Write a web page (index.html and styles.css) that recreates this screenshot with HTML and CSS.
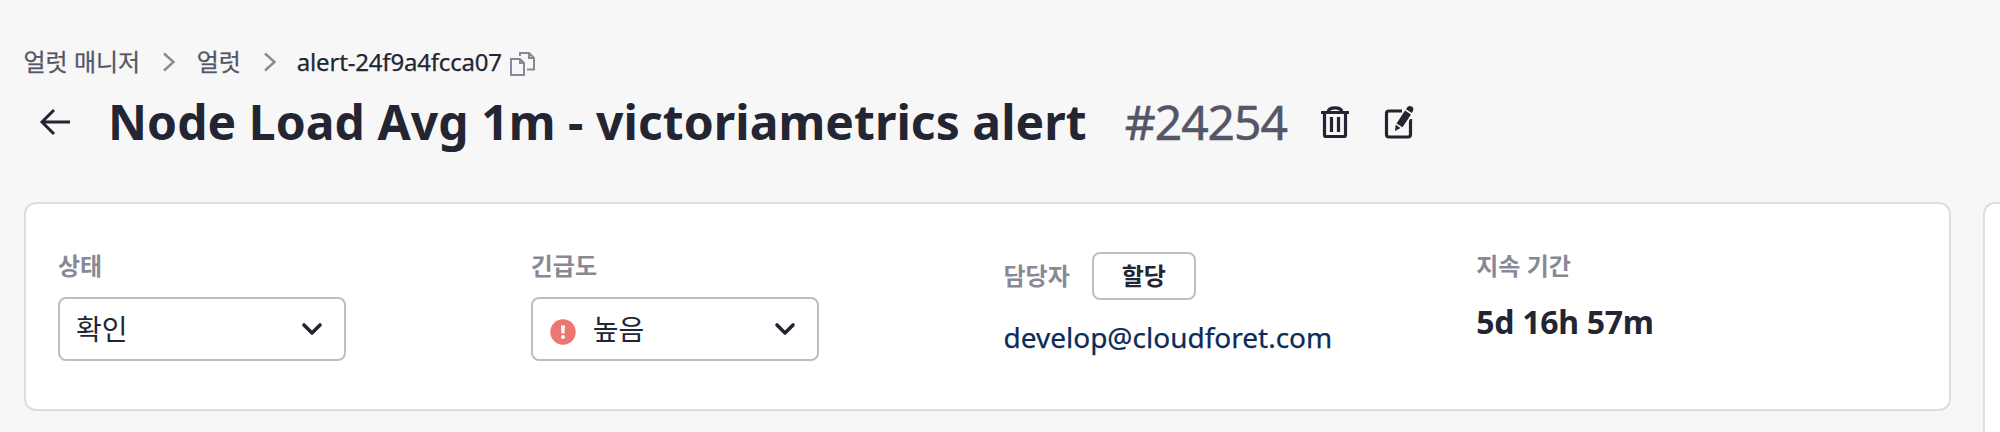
FILE: index.html
```html
<!DOCTYPE html>
<html lang="ko">
<head>
<meta charset="utf-8">
<title>Alert</title>
<link rel="stylesheet" href="styles.css">
</head>
<body>
<nav class="breadcrumb">
  <span class="crumb">얼럿 매니저</span>
  <svg class="separator" width="14" height="20" viewBox="0 0 14 20"><path d="M2 1.500 11.500 10 2 18.500"/></svg>
  <span class="crumb crumb-second">얼럿</span>
  <svg class="separator last" width="14" height="20" viewBox="0 0 14 20"><path d="M2 1.500 11.500 10 2 18.500"/></svg>
  <span class="crumb crumb-current">alert-24f9a4fcca07</span>
  <svg class="copy" width="25" height="24" viewBox="0 0 25 24"><path d="M10 4V1h9l5 5v11.500h-7M19 1v5h5M1 7h9l4 4v12H1zM10 7v4h4"/></svg>
</nav>
<header class="heading">
  <svg class="back" width="30" height="26" viewBox="0 0 30 26"><path d="M14 1 2 13l12 12M2 13h28"/></svg>
  <h1 class="title">Node Load Avg 1m - victoriametrics alert</h1>
  <span class="number">#24254</span>
  <svg class="action" width="28" height="32" viewBox="0 0 28 32"><path d="M0 6.500h28M7 6c1-5.500 13-5.500 14 0M3.500 7v22q0 1.500 1.500 1.500h18q1.500 0 1.500-1.500V7M10.500 11v15M17.500 11v15"/></svg>
  <svg class="action edit" width="28" height="33" viewBox="0 0 28 33"><path d="M17 5H4Q1.500 5 1.500 7.500v21Q1.500 31 4 31h19q2.500 0 2.500-2.500V13"/><path class="gap" d="M9 27l1-9 9-15 9 4-7 14z"/><path class="solid" d="m10 25 .6-6.300 4.900 3.300zM11.500 17.500 20 4.500l6 4L17.500 21.300zM21 3.200 22.300 1.300q1.900-2.400 4.500-.7 2.500 1.800 1.200 4.200l-1.200 2.200z"/></svg>
</header>
<main class="panels">
  <section class="card summary">
    <div class="field">
      <div class="label">상태</div>
      <div class="select"><span class="value">확인</span><svg class="chevron" width="20" height="13" viewBox="0 0 20 13"><path d="m2 2 8 8 8-8"/></svg></div>
    </div>
    <div class="field">
      <div class="label">긴급도</div>
      <div class="select"><svg class="urgency" width="26" height="26" viewBox="0 0 26 26"><circle cx="13" cy="13" r="12.700"/><path d="M11 6.500h4l-.5 8h-3z"/><circle class="dot" cx="13" cy="18" r="2"/></svg><span class="value">높음</span><svg class="chevron" width="20" height="13" viewBox="0 0 20 13"><path d="m2 2 8 8 8-8"/></svg></div>
    </div>
    <div class="field">
      <div class="assignee"><span class="label">담당자</span><button class="assign">할당</button></div>
      <a class="email">develop@cloudforet.com</a>
    </div>
    <div class="field">
      <div class="label">지속 기간</div>
      <div class="duration">5d 16h 57m</div>
    </div>
  </section>
  <aside class="card side"></aside>
</main>
</body>
</html>
```
FILE: styles.css
```css
* { box-sizing: border-box; }
body {
  display: flex;
  flex-direction: column;
  margin: 0;
  height: 432px;
  overflow: hidden;
  background: #f7f7f7;
  color: #232533;
  font-family: "Noto Sans", "Noto Sans CJK KR", sans-serif;
}
svg { display: block; flex: none; fill: none; stroke: currentColor; overflow: visible; }
.breadcrumb {
  display: flex;
  align-items: center;
  height: 36px;
  margin-top: 44px;
  padding-left: 23.5px;
  font-size: 24px;
  line-height: 36px;
  color: #545667;
  white-space: nowrap;
  -webkit-text-stroke: 0.25px;
}
.separator { margin: 0 20px 0 22px; stroke-width: 2.4; color: #898995; }
.crumb-second { margin-left: 0.5px; }
.crumb-current { color: #232533; letter-spacing: -0.18px; }
.copy { margin: 4px 0 0 8px; stroke-width: 2; color: #898995; }
.heading {
  display: flex;
  align-items: center;
  height: 72px;
  margin-top: 6px;
  padding-left: 40px;
  white-space: nowrap;
}
.back { stroke-width: 3; margin-right: 38px; }
.title { margin: 0; font-size: 48px; line-height: 72px; font-weight: 700; letter-spacing: 0.06px; }
.number {
  margin: 0 34px 0 38px;
  font-size: 48px;
  line-height: 72px;
  letter-spacing: -1px;
  color: #545667;
  -webkit-text-stroke: 0.5px;
}
.action { stroke-width: 3.2; }
.edit { margin-left: 36px; }
.gap { fill: #f7f7f7; stroke: none; }
.solid { fill: currentColor; stroke: none; }
.panels { display: flex; flex: 1; min-height: 0; gap: 32px; padding-left: 24px; margin-top: 44px; }
.card { background: #fff; border: 2px solid #ddd; border-radius: 12px; }
.summary {
  display: grid;
  flex: none;
  grid-template-columns: repeat(4, 1fr);
  gap: 32px;
  width: 1927px;
  height: 209px;
  padding: 44px 32px 0;
}
.side { flex: 1; border-width: 2px 0 0 2px; border-radius: 12px 0 0 0; }
.label { font-size: 24px; line-height: 36px; font-weight: 700; color: #898995; }
.select {
  display: flex;
  align-items: center;
  width: 288px;
  height: 64px;
  margin-top: 13px;
  padding: 0 22px 0 16px;
  border: 2px solid #bdbdc5;
  border-radius: 8px;
  font-size: 28px;
}
.value { padding-bottom: 2px; }
.chevron { margin-left: auto; stroke-width: 3.6; stroke-linecap: round; stroke-linejoin: round; }
.urgency { margin: 5px 17px 0 1px; fill: #ee7672; stroke: none; }
.urgency path, .urgency .dot { fill: #fff; }
.assignee { display: flex; align-items: center; gap: 22px; margin-top: 4px; }
.assign {
  width: 104px;
  height: 48px;
  padding: 0;
  border: 2px solid #bdbdc5;
  border-radius: 8px;
  background: #fff;
  color: #232533;
  font: 700 24px/36px "Noto Sans", "Noto Sans CJK KR", sans-serif;
}
.email {
  display: block;
  margin-top: 16px;
  font-size: 28px;
  line-height: 42px;
  color: #0c2b58;
  -webkit-text-stroke: 0.25px;
}
.duration { margin-top: 14px; font-size: 32px; line-height: 48px; font-weight: 700; letter-spacing: -0.3px; }
```
